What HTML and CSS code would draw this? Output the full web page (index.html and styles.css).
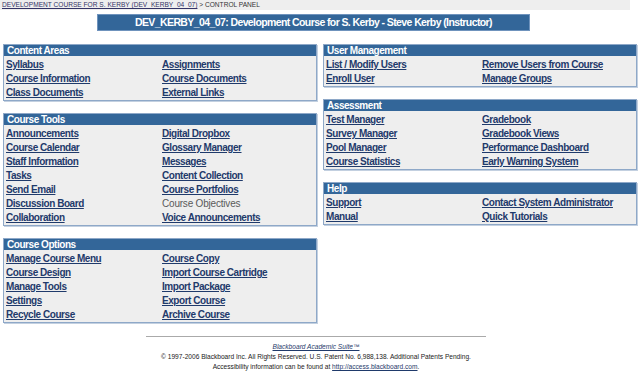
FILE: index.html
```html
<!DOCTYPE html>
<html>
<head>
<meta charset="utf-8">
<link rel="stylesheet" href="styles.css">
</head>
<body>
<div class="crumbs"><a href="#">DEVELOPMENT COURSE FOR S. KERBY (DEV_KERBY_04_07)</a> &gt; CONTROL PANEL</div>
<div class="titlewrap"><div class="title">DEV_KERBY_04_07: Development Course for S. Kerby - Steve Kerby (Instructor)</div></div>
<div class="cols">
  <div class="col">
    <div class="panel">
      <div class="ph">Content Areas</div>
      <div class="pb">
        <a href="#">Syllabus</a><a href="#">Assignments</a>
        <a href="#">Course Information</a><a href="#">Course Documents</a>
        <a href="#">Class Documents</a><a href="#">External Links</a>
      </div>
    </div>
    <div class="panel">
      <div class="ph">Course Tools</div>
      <div class="pb">
        <a href="#">Announcements</a><a href="#">Digital Dropbox</a>
        <a href="#">Course Calendar</a><a href="#">Glossary Manager</a>
        <a href="#">Staff Information</a><a href="#">Messages</a>
        <a href="#">Tasks</a><a href="#">Content Collection</a>
        <a href="#">Send Email</a><a href="#">Course Portfolios</a>
        <a href="#">Discussion Board</a><span class="off">Course Objectives</span>
        <a href="#">Collaboration</a><a href="#">Voice Announcements</a>
      </div>
    </div>
    <div class="panel">
      <div class="ph">Course Options</div>
      <div class="pb">
        <a href="#">Manage Course Menu</a><a href="#">Course Copy</a>
        <a href="#">Course Design</a><a href="#">Import Course Cartridge</a>
        <a href="#">Manage Tools</a><a href="#">Import Package</a>
        <a href="#">Settings</a><a href="#">Export Course</a>
        <a href="#">Recycle Course</a><a href="#">Archive Course</a>
      </div>
    </div>
  </div>
  <div class="col">
    <div class="panel">
      <div class="ph">User Management</div>
      <div class="pb">
        <a href="#">List / Modify Users</a><a href="#">Remove Users from Course</a>
        <a href="#">Enroll User</a><a href="#">Manage Groups</a>
      </div>
    </div>
    <div class="panel">
      <div class="ph">Assessment</div>
      <div class="pb">
        <a href="#">Test Manager</a><a href="#">Gradebook</a>
        <a href="#">Survey Manager</a><a href="#">Gradebook Views</a>
        <a href="#">Pool Manager</a><a href="#">Performance Dashboard</a>
        <a href="#">Course Statistics</a><a href="#">Early Warning System</a>
      </div>
    </div>
    <div class="panel">
      <div class="ph">Help</div>
      <div class="pb">
        <a href="#">Support</a><a href="#">Contact System Administrator</a>
        <a href="#">Manual</a><a href="#">Quick Tutorials</a>
      </div>
    </div>
  </div>
</div>
<div class="footer">
  <div class="rule"></div>
  <div class="fl"><a href="#" class="suite">Blackboard Academic Suite™</a></div>
  <div class="fl">© 1997-2006 Blackboard Inc. All Rights Reserved. U.S. Patent No. 6,988,138. Additional Patents Pending.</div>
  <div class="fl">Accessibility information can be found at <a href="#">http://access.blackboard.com</a>.</div>
</div>
</body>
</html>
```
FILE: styles.css
```css
html, body {
  margin: 0;
  padding: 0;
  background: #ffffff;
  font-family: "Liberation Sans", Arial, sans-serif;
}
.crumbs {
  width: 628px;
  height: 10px;
  background: #eeeeee;
  font-size: 6.6px;
  line-height: 10px;
  padding-left: 2px;
  color: #333333;
}
.crumbs a {
  color: #333366;
}
.titlewrap {
  padding-top: 4px;
  padding-left: 97px;
  height: 30px;
}
.title {
  width: 431px;
  height: 15px;
  background: #336699;
  border: 1px solid #6f93bd;
  color: #ffffff;
  font-weight: bold;
  font-size: 10.5px;
  letter-spacing: -0.6px;
  line-height: 15px;
  text-align: center;
}
.cols {
  display: flex;
  gap: 6px;
  padding-left: 3px;
}
.col {
  width: 314px;
  display: flex;
  flex-direction: column;
  gap: 12px;
}
.panel {
  border: 1px solid #8ea8c8;
  box-shadow: 1px 1px 0 #c3d0e0;
  background: #eeeeee;
}
.ph {
  background: #336699;
  color: #ffffff;
  font-weight: bold;
  font-size: 10px;
  letter-spacing: -0.45px;
  height: 11px;
  line-height: 11px;
  padding-left: 3px;
}
.pb {
  display: grid;
  grid-template-columns: 156px 156px;
  grid-auto-rows: 14px;
  padding: 2px 0 0 0;
  font-size: 10px;
  letter-spacing: -0.45px;
  font-weight: bold;
  line-height: 14px;
}
.pb a, .pb .off {
  padding-left: 2px;
  white-space: nowrap;
}
.pb a {
  color: #1f3a6b;
  text-decoration: underline;
}
.pb .off {
  color: #5a5a5a;
  font-weight: normal;
  letter-spacing: -0.2px;
}
.footer {
  margin-top: 13px;
  display: flex;
  flex-direction: column;
  align-items: center;
  width: 632px;
  font-size: 6.6px;
  color: #222222;
}
.rule {
  width: 340px;
  height: 1px;
  background: #aaaaaa;
  margin-bottom: 5px;
}
.fl {
  line-height: 10px;
}
.fl a {
  color: #1f3a6b;
}
.suite {
  font-style: italic;
}
```
